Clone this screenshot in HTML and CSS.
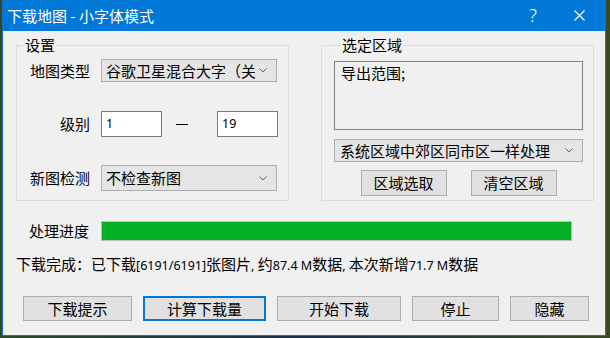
FILE: index.html
```html
<!DOCTYPE html>
<html lang="zh-CN">
<head>
<meta charset="utf-8">
<title>下载地图 - 小字体模式</title>
<link rel="stylesheet" href="styles.css">
</head>
<body>
<div class="window">
  <div class="titlebar">
    <span class="title">下载地图 - 小字体模式</span>
    <span class="cap help">?</span>
    <span class="cap close"><svg width="11" height="11" viewBox="0 0 11 11"><path d="M0.5 0.5L10.5 10.5M10.5 0.5L0.5 10.5" stroke="#fff" stroke-width="1.1" fill="none"/></svg></span>
  </div>
  <div class="content">
    <div class="groups">
      <fieldset class="group">
        <legend>设置</legend>
        <div class="form">
          <span class="lbl">地图类型</span>
          <div class="select first"><span class="val">谷歌卫星混合大字（关</span><svg class="chev" width="8" height="5" viewBox="0 0 8 5"><polyline points="0.5,0.5 4,4 7.5,0.5" fill="none" stroke="#606060" stroke-width="1"/></svg></div>
          <span class="lbl">级别</span>
          <div class="range"><div class="input">1</div><span class="dash"></span><div class="input">19</div></div>
          <span class="lbl">新图检测</span>
          <div class="select"><span class="val">不检查新图</span><svg class="chev" width="8" height="5" viewBox="0 0 8 5"><polyline points="0.5,0.5 4,4 7.5,0.5" fill="none" stroke="#606060" stroke-width="1"/></svg></div>
        </div>
      </fieldset>
      <fieldset class="group region">
        <legend>选定区域</legend>
        <div class="textarea">导出范围;</div>
        <div class="select wide"><span class="val">系统区域中郊区同市区一样处理</span><svg class="chev" width="8" height="5" viewBox="0 0 8 5"><polyline points="0.5,0.5 4,4 7.5,0.5" fill="none" stroke="#606060" stroke-width="1"/></svg></div>
        <div class="btnrow">
          <button class="btn region-btn">区域选取</button>
          <button class="btn region-btn">清空区域</button>
        </div>
      </fieldset>
    </div>
    <div class="progress-row">
      <span class="plabel">处理进度</span>
      <div class="bar"><div class="fill" style="width:100%"></div></div>
    </div>
    <p class="status">下载完成：已下载<span class="num">[6191/6191]</span>张图片<span class="num">, </span>约<span class="num">87.4 M</span>数据<span class="num">, </span>本次新增<span class="num">71.7 M</span>数据</p>
    <div class="actions">
      <button class="btn b1">下载提示</button>
      <button class="btn b2 focused">计算下载量</button>
      <button class="btn b3">开始下载</button>
      <button class="btn b4">停止</button>
      <button class="btn b5">隐藏</button>
    </div>
  </div>
</div>
</body>
</html>
```
FILE: styles.css
```css
* { box-sizing: border-box; }
html, body { margin: 0; padding: 0; }
body {
  width: 610px;
  height: 338px;
  overflow: hidden;
  background: linear-gradient(90deg, #2c4a2a 0%, #1c2f4a 50%, #3a4a22 100%);
  font-family: "Noto Sans CJK SC", sans-serif;
  font-size: 15px;
  color: #000;
}
.window {
  margin-left: 2px;
  width: 604px;
  height: 336px;
  border: 1px solid #1f6fc8;
  border-top: 0;
  background: #f0f0f0;
  display: flex;
  flex-direction: column;
}
.titlebar {
  height: 31px;
  background: #0078d7;
  color: #fff;
  display: flex;
  align-items: center;
  padding-left: 4px;
  padding-right: 3px;
}
.title {
  font-size: 15px;
  line-height: 20px;
  flex: 1;
}
.cap {
  width: 46px;
  height: 31px;
  display: flex;
  align-items: center;
  justify-content: center;
}
.help {
  font-family: "Noto Sans", sans-serif;
  font-size: 18px;
  font-weight: 300;
  padding-bottom: 1px;
}
.content {
  flex: 1;
  padding: 4px 10px 0 13px;
}
.groups {
  display: flex;
  gap: 32px;
}
.group {
  margin: 0;
  padding: 0;
  min-width: 0;
  width: 273px;
  height: 166px;
  border: 1px solid #dcdcdc;
}
legend {
  margin-left: 7px;
  padding: 0 1px;
  font-size: 15px;
  line-height: 20px;
}
.form {
  display: grid;
  grid-template-columns: 73px 176px;
  grid-template-rows: 24px 26px 26px;
  column-gap: 11px;
  row-gap: 28px;
  padding-top: 4px;
}
.lbl {
  align-self: center;
  text-align: right;
  line-height: 20px;
}
.select {
  height: 26px;
  border: 1px solid #adadad;
  background: #e5e5e5;
  display: flex;
  align-items: center;
  padding-left: 4px;
  padding-right: 9px;
  overflow: hidden;
  white-space: nowrap;
}
.select.first { height: 23px; align-self: start; }
.select .val { flex: 1; overflow: hidden; line-height: 20px; }
.chev { flex: none; margin-left: 4px; }
.range {
  display: flex;
  align-items: center;
  width: 177px;
}
.input {
  width: 61px;
  height: 26px;
  border: 1px solid #7a7a7a;
  background: #fff;
  padding-left: 4px;
  font-family: "Noto Sans", sans-serif;
  font-size: 12.5px;
  line-height: 24px;
}
.dash {
  width: 12px;
  height: 1px;
  background: #000;
  margin: 1px 29px 0 14px;
}
.region {
  padding: 6px 10px 0 12px;
}
.textarea {
  height: 69px;
  border: 1px solid #828282;
  background: #f0f0f0;
  padding: 1px 6px;
  line-height: 20px;
}
.select.wide {
  height: 23px;
  margin-top: 9px;
  padding-left: 5px;
}
.btnrow {
  display: flex;
  justify-content: center;
  gap: 24px;
  margin-top: 8px;
}
.btn {
  font-family: "Noto Sans CJK SC", sans-serif;
  font-size: 15px;
  color: #000;
  background: #e1e1e1;
  border: 1px solid #adadad;
  padding: 0;
  margin: 0;
  line-height: 20px;
}
.region-btn { width: 86px; height: 26px; }
.progress-row {
  display: flex;
  align-items: center;
  gap: 12px;
  margin-top: 20px;
  padding-left: 13px;
}
.plabel { line-height: 20px; }
.bar {
  width: 471px;
  height: 20px;
  border: 1px solid #bcbcbc;
  background: #e6e6e6;
}
.fill { height: 100%; background: #06b025; }
.status {
  margin: 13px 0 0 0;
  line-height: 20px;
  white-space: nowrap;
}
.num {
  font-family: "Noto Sans", sans-serif;
  font-size: 12.5px;
}
.actions {
  display: flex;
  gap: 11px;
  margin-top: 20px;
  padding-left: 7px;
}
.actions .btn { height: 25px; }
.b1 { width: 109px; }
.b2 { width: 123px; }
.b3 { width: 124px; }
.b4 { width: 87px; }
.b5 { width: 79px; }
.focused {
  border: 2px solid #0078d7;
}
```
